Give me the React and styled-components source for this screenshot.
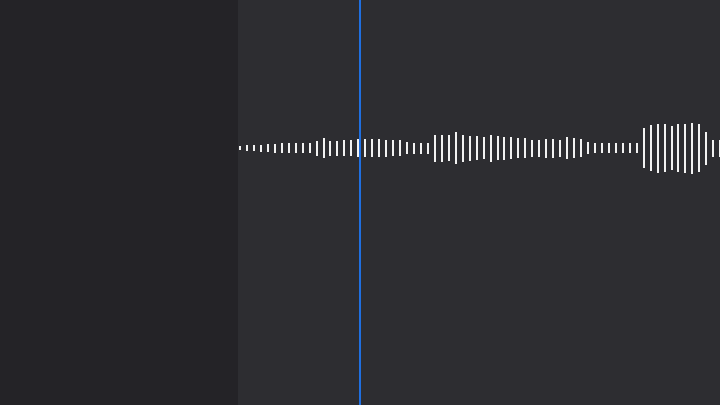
import React from 'react'
import styled, { createGlobalStyle } from 'styled-components'

const GlobalStyle = createGlobalStyle`
  html, body {
    margin: 0;
    padding: 0;
    background: #2d2d31;
    font-family: "Inter", "Liberation Sans", sans-serif;
  }
  #root {
    height: 100vh;
  }
`;

const Editor = styled.div`
  display: flex;
  width: 720px;
  height: 405px;
  overflow: hidden;
`;

const Sidebar = styled.aside`
  width: 238px;
  flex-shrink: 0;
  background: #242327;
`;

const Timeline = styled.section`
  position: relative;
  flex: 1;
  background: #2d2d31;
  padding-top: 121px;
`;

const WaveWrap = styled.div`
  height: 54px;
`;

const Playhead = styled.div`
  position: absolute;
  top: 0;
  bottom: 0;
  left: ${p => p.x}px;
  width: 2px;
  background: #1f6fe0;
`;

const HEIGHTS = [
  4, 6, 6, 7, 8, 9, 10, 10, 10, 10, 10, 15, 20, 15, 15, 16, 16, 18, 18, 18,
  18, 17, 16, 16, 12, 11, 11, 11, 27, 27, 26, 32, 27, 25, 24, 22, 27, 24, 23, 22,
  20, 20, 17, 17, 19, 19, 17, 22, 20, 18, 12, 10, 10, 10, 10, 10, 10, 10, 40, 46,
  49, 48, 44, 48, 49, 51, 48, 33, 17, 17,
];

const Waveform = () => (
  <svg width="482" height="54" viewBox="0 0 482 54" shapeRendering="crispEdges">
    {HEIGHTS.map((h, i) => (
      <rect
        key={i}
        x={Math.round(1 + i * 6.96)}
        y={Math.round(27 - h / 2)}
        width="2"
        height={h}
        fill="#f2f2f2"
      />
    ))}
  </svg>
);

const App = () => {
  return (
    <Editor>
      <GlobalStyle />
      <Sidebar />
      <Timeline>
        <WaveWrap>
          <Waveform />
        </WaveWrap>
        <Playhead x={121} />
      </Timeline>
    </Editor>
  )
}

export default App
